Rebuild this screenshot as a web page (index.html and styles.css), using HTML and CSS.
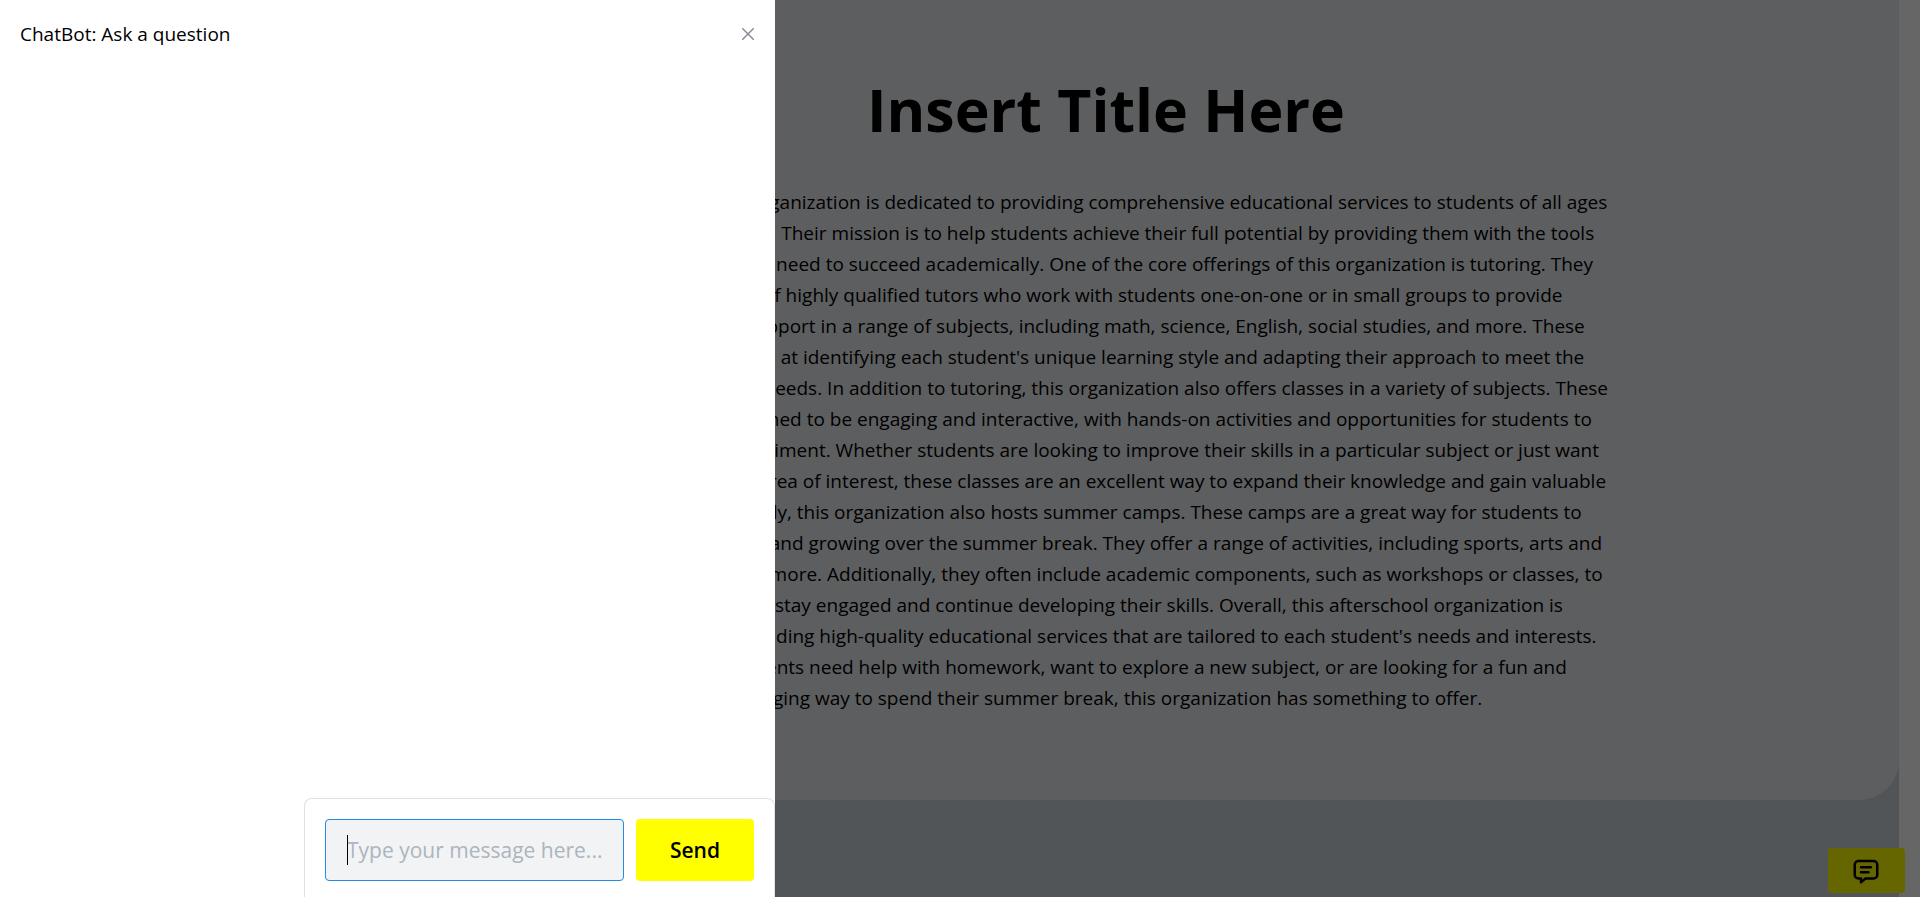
FILE: index.html
```html
<!DOCTYPE html>
<html lang="en">
<head>
<meta charset="utf-8">
<title>ChatBot</title>
<link rel="stylesheet" href="styles.css">
</head>
<body>
<div class="page">
  <main class="hero">
    <h1 class="hero-title">Insert Title Here</h1>
    <p class="hero-text">This afterschool organization is dedicated to providing comprehensive educational services to students of all ages<br>
and backgrounds. Their mission is to help students achieve their full potential by providing them with the tools<br>
and support they need to succeed academically. One of the core offerings of this organization is tutoring. They<br>
have a team of highly qualified tutors who work with students one-on-one or in small groups to provide<br>
personalized support in a range of subjects, including math, science, English, social studies, and more. These<br>
tutors are skilled at identifying each student's unique learning style and adapting their approach to meet the<br>
individual learner needs. In addition to tutoring, this organization also offers classes in a variety of subjects. These<br>
classes are designed to be engaging and interactive, with hands-on activities and opportunities for students to<br>
explore and experiment. Whether students are looking to improve their skills in a particular subject or just want<br>
to explore a new area of interest, these classes are an excellent way to expand their knowledge and gain valuable<br>
skills. Additionally, this organization also hosts summer camps. These camps are a great way for students to<br>
continue learning and growing over the summer break. They offer a range of activities, including sports, arts and<br>
crafts, music, and more. Additionally, they often include academic components, such as workshops or classes, to<br>
help students stay engaged and continue developing their skills. Overall, this afterschool organization is<br>
dedicated to providing high-quality educational services that are tailored to each student's needs and interests.<br>
Whether students need help with homework, want to explore a new subject, or are looking for a fun and<br>
engaging way to spend their summer break, this organization has something to offer.</p>
  </main>
</div>
<button class="chat-toggle" type="button" aria-label="Open chat">
  <svg viewBox="0 0 24 24" width="30" height="30" aria-hidden="true"><path d="M12 18h-.5L8 21v-3H6a3 3 0 0 1-3-3V7a3 3 0 0 1 3-3h12a3 3 0 0 1 3 3v8a3 3 0 0 1-3 3h-6zM8 9h8M8 13h6"/></svg>
</button>
<div class="overlay"></div>
<section class="drawer" role="dialog" aria-labelledby="drawer-title">
  <header class="drawer-header">
    <h2 class="drawer-title" id="drawer-title">ChatBot: Ask a question</h2>
    <button class="close" type="button" aria-label="Close">
      <svg viewBox="0 0 12 12" width="12" height="12" aria-hidden="true"><path d="M.5.5l11 11M11.5.5l-11 11"/></svg>
    </button>
  </header>
  <form class="composer">
    <div class="field">
      <input class="message" type="text" placeholder="Type your message here..." aria-label="Message">
      <span class="caret"></span>
    </div>
    <button class="send" type="button">Send</button>
  </form>
</section>
</body>
</html>
```
FILE: styles.css
```css
* { box-sizing: border-box; }
body {
  margin: 0;
  height: 100vh;
  overflow: hidden;
  background: #fff;
  color: #000;
  font-family: "Segoe UI", "Open Sans", sans-serif;
  font-size: 19px;
  line-height: 31px;
}
.page {
  height: 100vh;
  margin-right: 21px;
  background: #ced4da;
}
.hero {
  padding: 60px 0 86px 313px;
  border-radius: 0 0 40px 0;
  background: #e9ecef;
  text-align: center;
}
.hero-title {
  margin: 0 0 28px;
  font-size: 59px;
  line-height: 99px;
  font-weight: 700;
}
.hero-text {
  margin: 0;
  white-space: nowrap;
}
.chat-toggle {
  position: fixed;
  right: 15px;
  bottom: 4px;
  display: flex;
  align-items: center;
  justify-content: center;
  width: 77px;
  height: 45px;
  padding: 0 2px 0 0;
  border: 0;
  border-radius: 4px;
  background: #ff0;
}
svg { fill: none; stroke: #000; stroke-width: 2; stroke-linecap: round; stroke-linejoin: round; }
.overlay {
  position: fixed;
  inset: 0;
  background: rgba(0, 0, 0, .6);
}
.drawer {
  position: fixed;
  top: 0;
  bottom: 0;
  left: 0;
  display: flex;
  flex-direction: column;
  justify-content: space-between;
  width: 775px;
  background: #fff;
}
.drawer-header {
  display: flex;
  align-items: center;
  justify-content: space-between;
  padding: 19px 20px;
}
.drawer-title {
  margin: 0;
  font-size: 19px;
  font-weight: 400;
}
.close {
  display: flex;
  padding: 0 1px 2px;
  border: 0;
  background: none;
}
.close svg { stroke: #868e96; stroke-width: 1.5; }
.composer {
  display: flex;
  align-self: flex-end;
  gap: 12px;
  padding: 20px 20px 16px;
  border: 1px solid #dee2e6;
  border-bottom: 0;
  border-radius: 8px 8px 0 0;
}
.field { position: relative; }
.message {
  display: block;
  width: 299px;
  height: 62px;
  padding: 0 20px 0 21px;
  border: 1px solid #228be6;
  border-radius: 4px;
  outline: 0;
  background: #f1f3f5;
  font: 400 21px "Segoe UI", "Open Sans", sans-serif;
}
.message::placeholder { color: #adb5bd; opacity: 1; }
.caret {
  position: absolute;
  top: 16px;
  left: 22px;
  width: 1px;
  height: 30px;
  background: #000;
}
.send {
  width: 118px;
  height: 62px;
  padding: 0;
  border: 0;
  border-radius: 4px;
  background: #ff0;
  color: #000;
  font: 600 21px "Segoe UI", "Open Sans", sans-serif;
}
```
